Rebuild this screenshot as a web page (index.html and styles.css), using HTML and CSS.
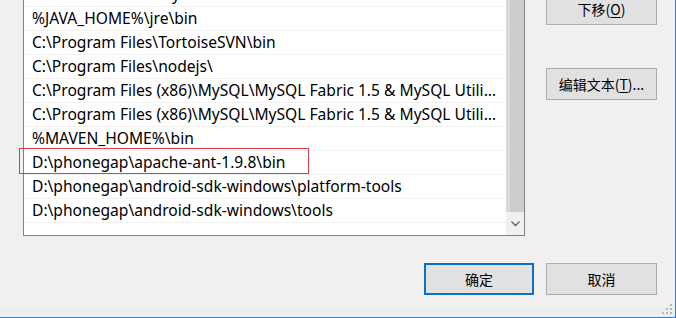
FILE: index.html
```html
<!DOCTYPE html>
<html lang="zh-CN">
<head>
    <meta charset="UTF-8">
    <meta name="viewport" content="width=device-width, initial-scale=1.0">
    <title>编辑环境变量</title>
    <link rel="stylesheet" href="styles.css">
</head>
<body>
    <div id="dlg">
        <div class="body">
            <div class="top">
                <div class="list">
                    <ul class="rows">
                        <li>%SYSTEMROOT%\System32\WindowsPowerShell\v1.0\</li>
                        <li>%JAVA_HOME%\jre\bin</li>
                        <li>C:\Program Files\TortoiseSVN\bin</li>
                        <li>C:\Program Files\nodejs\</li>
                        <li>C:\Program Files (x86)\MySQL\MySQL Fabric 1.5 &amp; MySQL Utilities 1.5\</li>
                        <li>C:\Program Files (x86)\MySQL\MySQL Fabric 1.5 &amp; MySQL Utilities 1.5\Doctrine extensions for PHP\</li>
                        <li>%MAVEN_HOME%\bin</li>
                        <li>D:\phonegap\apache-ant-1.9.8\bin</li>
                        <li>D:\phonegap\android-sdk-windows\platform-tools</li>
                        <li>D:\phonegap\android-sdk-windows\tools</li>
                    </ul>
                    <div class="sbar">
                        <div class="thumb"></div>
                        <div class="down">
                            <svg width="9" height="6" viewBox="0 0 9 6"><path d="M0.5 0.5 L4.5 4.5 L8.5 0.5" fill="none" stroke="#606060" stroke-width="1.3"/></svg>
                        </div>
                    </div>
                </div>
                <div class="side">
                    <button class="btn">下移(<u>O</u>)</button>
                    <button class="btn edit">编辑文本(<u>T</u>)...</button>
                </div>
            </div>
            <div class="foot">
                <button class="btn ok">确定</button>
                <button class="btn">取消</button>
            </div>
        </div>
        <div class="strip"></div>
        <!-- 红框标注 -->
        <div class="mark"></div>
        <div class="grip">
            <svg width="10" height="10" viewBox="0 0 10 10" fill="#b8b8b8">
                <rect x="8" y="0" width="2" height="2"/>
                <rect x="4" y="4" width="2" height="2"/><rect x="8" y="4" width="2" height="2"/>
                <rect x="0" y="8" width="2" height="2"/><rect x="4" y="8" width="2" height="2"/><rect x="8" y="8" width="2" height="2"/>
            </svg>
        </div>
    </div>
</body>
</html>
```

FILE: styles.css
```css
* { margin:0; padding:0; box-sizing: border-box;}
body {
    background: #f0f0f0;
    font-family: "Noto Sans", "Noto Sans CJK SC", sans-serif;
}
#dlg {
    width: 676px;
    height: 318px;
    position: relative;
    overflow: hidden;
    display: flex;
    flex-direction: column;
    background: #f0f0f0;
    border-right: 1px solid #3a7cc1;
    border-bottom: 1px solid #3a7cc1;
}
.body {
    flex: 1;
    padding: 0 18px 0 23px;
    overflow: hidden;
}
.top {
    display: flex;
    margin-top: -18px;
}
.list {
    width: 502px;
    height: 254px;
    border: 1px solid #828282;
    background: #fff;
    display: flex;
}
.rows {
    flex: 1;
    min-width: 0;
    list-style: none;
}
.rows li {
    height: 24px;
    line-height: 22px;
    padding-left: 8px;
    padding-right: 10px;
    font-size: 15.6px;
    color: #000;
    border-bottom: 1px solid #f0f0f0;
    white-space: nowrap;
    overflow: hidden;
    text-overflow: ellipsis;
}
.sbar {
    width: 18px;
    display: flex;
    flex-direction: column;
    background: #dadada;
}
.thumb {
    flex: 1;
    margin-left: 4px;
    background: #cdcdcd;
}
.down {
    height: 23px;
    background: #f0f0f0;
    display: flex;
    align-items: center;
    justify-content: center;
}
.side {
    margin-left: 21px;
    padding-top: 11px;
    display: flex;
    flex-direction: column;
    gap: 43px;
}
.btn {
    width: 111px;
    height: 32px;
    background: #e1e1e1;
    border: 1px solid #adadad;
    font-family: "Noto Sans CJK SC", sans-serif;
    font-size: 14px;
    color: #000;
}
.btn u {
    text-underline-offset: 2px;
}
.foot {
    display: flex;
    justify-content: flex-end;
    gap: 12px;
    margin-top: 27px;
}
.ok {
    width: 110px;
    border: 2px solid #0f6fc6;
}
.strip {
    height: 10px;
    background: #ebeff4;
}
.mark {
    position: absolute;
    left: 19px;
    top: 148px;
    width: 290px;
    height: 26px;
    border: 1px solid #d8404a;
}
.grip {
    position: absolute;
    right: 3px;
    bottom: 3px;
    width: 10px;
    height: 10px;
    line-height: 0;
}
```
